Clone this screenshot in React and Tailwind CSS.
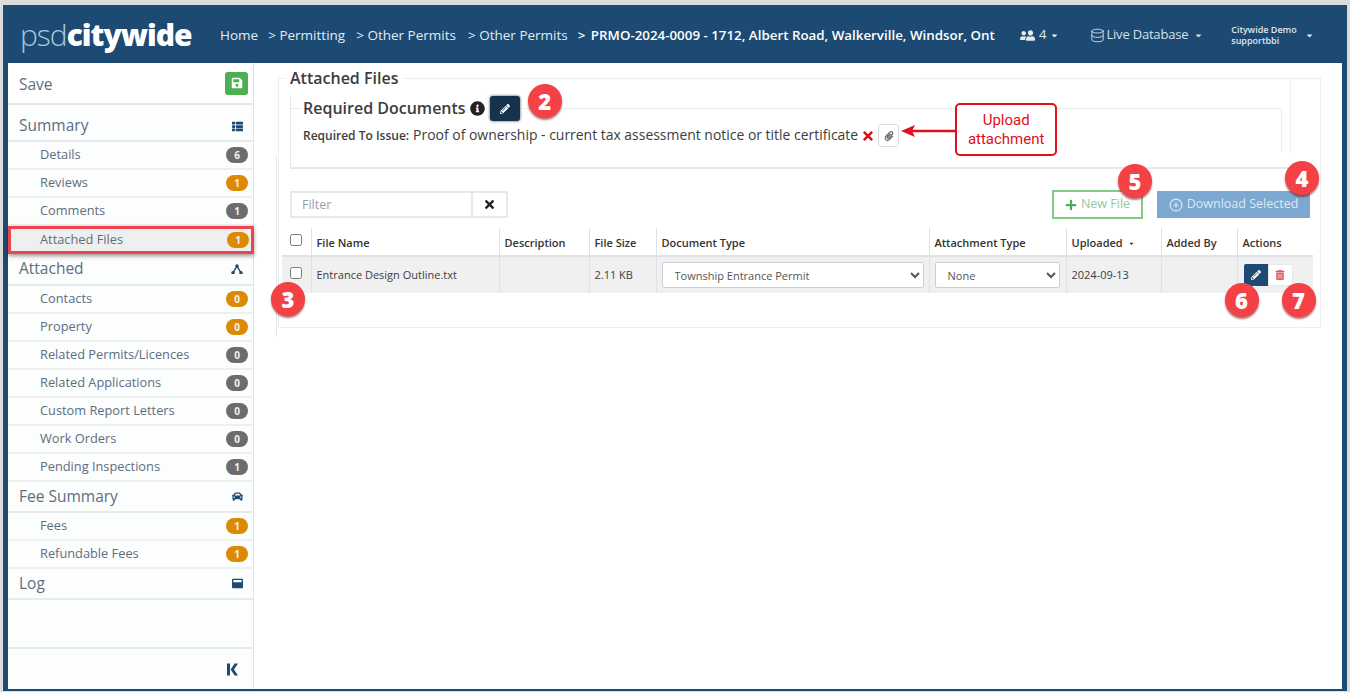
import { FaSave, FaThList, FaCar, FaWindowMaximize, FaInfoCircle, FaPencilAlt, FaTimes, FaPaperclip, FaPlus, FaTrashAlt, FaUserFriends, FaCaretDown } from 'react-icons/fa';
import { Database, CirclePlus } from 'lucide-react';

const summaryItems = [
  { label: 'Details', count: 6, tone: 'gray' },
  { label: 'Reviews', count: 1, tone: 'orange' },
  { label: 'Comments', count: 1, tone: 'gray' },
  { label: 'Attached Files', count: 1, tone: 'orange', active: true },
];

const attachedItems = [
  { label: 'Contacts', count: 0, tone: 'orange' },
  { label: 'Property', count: 0, tone: 'orange' },
  { label: 'Related Permits/Licences', count: 0, tone: 'gray' },
  { label: 'Related Applications', count: 0, tone: 'gray' },
  { label: 'Custom Report Letters', count: 0, tone: 'gray' },
  { label: 'Work Orders', count: 0, tone: 'gray' },
  { label: 'Pending Inspections', count: 1, tone: 'gray' },
];

const feeItems = [
  { label: 'Fees', count: 1, tone: 'orange' },
  { label: 'Refundable Fees', count: 1, tone: 'orange' },
];

function Marker({ n, className }) {
  return (
    <span className={`absolute z-20 flex h-[34px] w-[34px] items-center justify-center rounded-full bg-[#f44145] text-[22px] font-extrabold leading-none text-white shadow-[0_2px_2px_rgba(120,0,0,0.55)] ${className}`}>
      {n}
    </span>
  );
}

function SubItem({ label, count, tone, active }) {
  const rowClass = active
    ? 'h-[28px] border-[3px] border-[#f0434f] bg-[#eef0ef] pl-[29px] pr-[2px] shadow-[0_2px_4px_rgba(0,0,0,0.4)] relative w-[246px]'
    : 'h-[28px] border-b-2 border-[#eef0f2] pl-[32px] pr-[5px]';
  return (
    <div className={`flex items-center justify-between text-[12.8px] text-[#5d6d82] ${rowClass}`}>
      <span>{label}</span>
      <span className={`flex h-[16px] w-[22px] items-center justify-center rounded-full text-[10px] font-bold text-[#f2f2f2] ${tone === 'orange' ? 'bg-[#dc8a04]' : 'bg-[#6c6c6c]'}`}>
        {count}
      </span>
    </div>
  );
}

function Section({ label, icon, className }) {
  return (
    <div className={`flex items-center justify-between border-b-2 border-[#e8ebee] pl-[11px] pr-[9px] text-[15.5px] text-[#5d6d82] ${className}`}>
      <span>{label}</span>
      <span className="flex w-[14px] justify-center text-[#1d4a73]">{icon}</span>
    </div>
  );
}

function Sidebar() {
  return (
    <aside className="flex w-[246px] shrink-0 flex-col border-r border-[#dfe2e6] bg-[#fcfdfd]">
      <div className="flex h-[42px] items-center justify-between border-b-2 border-[#e4e6ea] bg-white pl-[11px] pr-[5px] text-[15.5px] text-[#5d6d82]">
        <span className="pt-[3px]">Save</span>
        <span className="flex h-[23px] w-[23px] items-center justify-center rounded-[3px] bg-[#4caf50] text-white">
          <FaSave size={12} />
        </span>
      </div>
      <Section label="Summary" icon={<FaThList size={11} />} className="h-[37px] pt-[7px]" />
      {summaryItems.map((item) => <SubItem key={item.label} {...item} />)}
      <Section
        label="Attached"
        className="h-[32px]"
        icon={
          <svg width="12" height="10" viewBox="0 0 12 10" fill="none" stroke="currentColor" strokeWidth="1.5">
            <path d="M2 9 6 2l4 7" />
            <circle cx="6" cy="2" r="1" fill="currentColor" />
            <circle cx="2" cy="8.8" r="1" fill="currentColor" />
            <circle cx="10" cy="8.8" r="1" fill="currentColor" />
          </svg>
        }
      />
      {attachedItems.map((item) => <SubItem key={item.label} {...item} />)}
      <Section label="Fee Summary" icon={<FaCar size={11} />} className="h-[31px]" />
      {feeItems.map((item) => <SubItem key={item.label} {...item} />)}
      <Section label="Log" icon={<FaWindowMaximize size={11} />} className="h-[31px]" />
      <div className="mt-[47px] flex flex-1 items-center justify-end border-t-2 border-[#e8ebee] pr-[14px] text-[#1d4a73]">
        <svg width="12" height="13" viewBox="0 0 12 13" fill="currentColor">
          <rect x="0" y="0.5" width="3" height="12" />
          <path d="M11 0.5h-3.4L3.6 6.5l4 6H11l-4-6z" />
        </svg>
      </div>
    </aside>
  );
}

function Header() {
  return (
    <header className="flex h-[58px] shrink-0 items-center bg-[#1c4a73] pt-[2px] text-white">
      <div className="ml-[12px] w-[200px] shrink-0 text-[30px] leading-none tracking-[-1px]">
        <span className="font-light text-[#a9c7de]">psd</span>
        <span className="font-extrabold">citywide</span>
      </div>
      <nav className="flex w-[775px] shrink-0 items-center whitespace-nowrap text-[13.5px] text-[#e4ebf2]">
        <span>Home</span>
        <span className="ml-[10px]">&gt; Permitting</span>
        <span className="ml-[11px]">&gt; Other Permits</span>
        <span className="ml-[12px]">&gt; Other Permits</span>
        <span className="ml-[10px] text-[13.35px] font-semibold text-white">&gt; <span className="ml-[2px]">PRMO-2024-0009 - 1712, Albert Road, Walkerville, Windsor, Ont</span></span>
      </nav>
      <div className="ml-[25px] flex items-center gap-[4px] text-[13px] text-[#e4ebf2]">
        <FaUserFriends size={15} className="-scale-x-100" />
        <span>4</span>
        <FaCaretDown size={9} />
      </div>
      <div className="ml-[31px] flex items-center gap-[1px] text-[13px] tracking-[-0.2px] text-[#d5e0ea]">
        <Database size={15} strokeWidth={1.5} />
        <span>Live Database</span>
        <FaCaretDown size={9} className="ml-[5px]" />
      </div>
      <div className="ml-[28px] flex items-center gap-[8px] text-[9px] font-semibold leading-[11px] text-[#dfe7ef]">
        <div>
          <div>Citywide Demo</div>
          <div>supportbbi</div>
        </div>
        <FaCaretDown size={9} />
      </div>
    </header>
  );
}

const th = 'border-r border-[#dee2e6] px-[5px] pt-[3px] align-middle text-[11px] font-semibold text-[#333]';
const td = 'border-r border-[#dee2e6] px-[5px] align-middle text-[11px] text-[#3d3d3d]';

function FilesTable() {
  return (
    <table className="w-[1031px] table-fixed border-collapse">
      <colgroup>
        <col className="w-[29px]" />
        <col className="w-[188px]" />
        <col className="w-[90px]" />
        <col className="w-[67px]" />
        <col className="w-[273px]" />
        <col className="w-[137px]" />
        <col className="w-[95px]" />
        <col className="w-[76px]" />
        <col className="w-[76px]" />
      </colgroup>
      <thead>
        <tr className="h-[28px] border-b-2 border-[#dee2e6] text-left">
          <th className={`${th} !px-0 !pt-0 text-center`}><input type="checkbox" className="relative top-[-2px] h-[12px] w-[12px] align-middle" /></th>
          <th className={th}>File Name</th>
          <th className={th}>Description</th>
          <th className={th}>File Size</th>
          <th className={th}>Document Type</th>
          <th className={th}>Attachment Type</th>
          <th className={th}>
            <span className="flex items-center gap-[5px]">Uploaded <FaCaretDown size={7} /></span>
          </th>
          <th className={th}>Added By</th>
          <th className={`${th} border-r-0`}>Actions</th>
        </tr>
      </thead>
      <tbody>
        <tr className="h-[37px] bg-[#f0f0f0]">
          <td className={`${td} relative !px-0 text-center`}>
            <input type="checkbox" className="relative top-[-3px] h-[12px] w-[12px] align-middle" />
            <Marker n={3} className="left-[-11px] top-[25px]" />
          </td>
          <td className={td}>Entrance Design Outline.txt</td>
          <td className={td}></td>
          <td className={td}>2.11 KB</td>
          <td className={td}>
            <select className="h-[26px] w-[262px] rounded-[2px] border border-[#ccd0d4] bg-white pl-[8px] text-[11px] text-[#555]">
              <option>Township Entrance Permit</option>
            </select>
          </td>
          <td className={td}>
            <select className="h-[26px] w-[125px] rounded-[2px] border border-[#ccd0d4] bg-white pl-[8px] text-[11px] text-[#555]">
              <option>None</option>
            </select>
          </td>
          <td className={td}>2024-09-13</td>
          <td className={td}></td>
          <td className="px-[6px] align-middle">
            <div className="relative flex h-[22px] w-[49px]">
              <button className="flex w-[24px] items-center justify-center rounded-l-[2px] bg-[#1c4a73] text-white"><FaPencilAlt size={10} /></button>
              <button className="flex w-[25px] items-center justify-center rounded-r-[2px] border border-[#e8e8e8] bg-white text-[#e5545c]"><FaTrashAlt size={10} /></button>
              <Marker n={6} className="left-[-19px] top-[19px]" />
              <Marker n={7} className="left-[38px] top-[19px]" />
            </div>
          </td>
        </tr>
      </tbody>
    </table>
  );
}

function Main() {
  return (
    <main className="relative min-w-0 flex-1 pl-[24px] pt-[6px]">
      <div className="absolute left-[22px] top-[93px] h-[181px] w-px bg-[#e8e8e8]" />
      <div className="absolute left-[1036px] top-[17px] h-[73px] w-px bg-[#eeeeee]" />
      <fieldset className="h-[259px] w-[1043px] border border-[#eeeeee] px-[3px]">
        <legend className="ml-[4px] px-[4px] text-[16px] font-semibold leading-[18px] text-[#3c3c3c]">Attached Files</legend>

        <div className="ml-[8px] mt-[9px] w-[1021px] border-b-2 border-l border-[#e8e8e8]">
          <fieldset className="h-[56px] w-[991px] border-r border-t border-[#eeeeee]">
            <legend className="ml-[10px] flex items-center px-[2px] text-[16px] font-semibold leading-[25px] text-[#3c3c3c]">
              Required Documents
              <FaInfoCircle size={15} className="ml-[4px] text-[#222]" />
              <span className="relative ml-[5px] flex h-[25px] w-[30px] items-center justify-center rounded-[3px] bg-[#16324d] text-white shadow-[0_0_3px_rgba(0,0,0,0.7)]">
                <FaPencilAlt size={10} />
                <Marker n={2} className="left-[38px] top-[-12px]" />
              </span>
            </legend>
            <div className="ml-[12px] mt-[3px] flex items-center text-[#3d3d3d]">
              <span className="text-[12px] font-semibold">Required To Issue:</span>
              <span className="ml-[4px] text-[13.95px]">Proof of ownership - current tax assessment notice or title certificate</span>
              <FaTimes size={14} className="ml-[3px] text-[#d3131a]" />
              <span className="relative ml-[3px] flex h-[23px] w-[21px] items-center justify-center rounded-[3px] border border-[#dddddd] bg-white text-[#666]">
                <FaPaperclip size={10} />
                <span className="absolute left-[22px] top-[-1px] flex items-center">
                  <svg width="55" height="14" viewBox="0 0 55 14" className="text-[#e0101c]">
                    <path d="M55 7H8" stroke="currentColor" strokeWidth="2.5" />
                    <path d="M0 7l14-6-3 6 3 6z" fill="currentColor" />
                  </svg>
                </span>
                <span className="absolute left-[76px] top-[-22px] flex h-[53px] w-[102px] items-center justify-center whitespace-nowrap rounded-[5px] border-2 border-[#e0101c] bg-white text-center text-[15px] leading-[19px] text-[#e0101c] [font-family:Roboto,sans-serif]">
                  Upload<br />attachment
                </span>
              </span>
            </div>
          </fieldset>
          <div className="h-[15px]" />
        </div>

        <div className="ml-[8px] mt-[21px] flex h-[29px] w-[1021px] items-center">
          <div className="flex h-[27px] w-[218px] border-2 border-[#e6e9ec] bg-white">
            <span className="flex w-[181px] items-center border-r-2 border-[#e6e9ec] pl-[10px] pt-[1px] text-[12.5px] text-[#9aa0a6]">Filter</span>
            <span className="flex flex-1 items-center justify-center text-[#222]"><FaTimes size={13} /></span>
          </div>
          <div className="relative ml-[544px] flex h-[29px] w-[91px] items-center justify-center gap-[4px] border-2 border-[#84cb86] bg-white text-[12.5px] text-[#8fc9a0]">
            <FaPlus size={12} className="text-[#4caf50]" />
            New File
            <Marker n={5} className="left-[64px] top-[-28px]" />
          </div>
          <div className="relative ml-[14px] flex h-[27px] w-[153px] items-center justify-center gap-[4px] bg-[#7ba7d0] text-[12.5px] text-[#dfe9f3]">
            <CirclePlus size={14} />
            Download Selected
            <Marker n={4} className="left-[128px] top-[-30px]" />
          </div>
        </div>

        <div className="mt-[9px]">
          <FilesTable />
        </div>
      </fieldset>
    </main>
  );
}

export default function App() {
  return (
    <div className="h-[692px] w-[1350px] overflow-hidden bg-[#dcdcdc] pl-[3px] pt-[5px] [font-family:'Open_Sans',sans-serif]">
      <div className="flex h-[686px] w-[1344px] flex-col bg-[#1c4a73] px-[5px] pb-[2px]">
        <Header />
        <div className="flex min-h-0 flex-1 bg-white">
          <Sidebar />
          <Main />
        </div>
      </div>
    </div>
  );
}
